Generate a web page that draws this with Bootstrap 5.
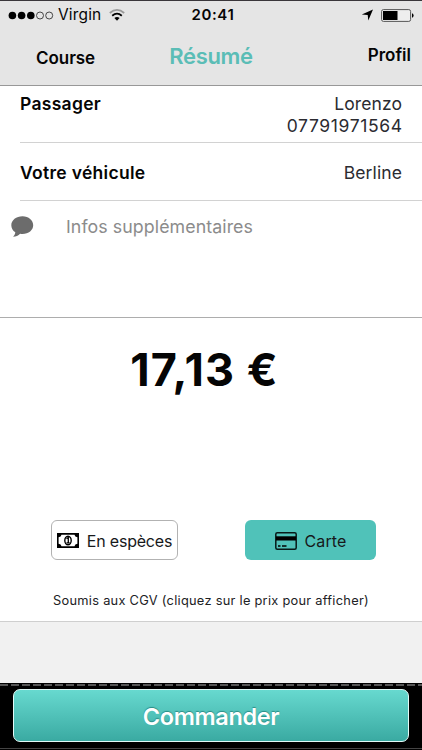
<!DOCTYPE html>
<html lang="fr">
<head>
<meta charset="utf-8">
<meta name="viewport" content="width=device-width, initial-scale=1">
<title>Résumé</title>
<link href="https://cdn.jsdelivr.net/npm/bootstrap@5.3.0/dist/css/bootstrap.min.css" rel="stylesheet">
<style>
body{font-family:Inter,"Liberation Sans",sans-serif;height:750px;overflow:hidden;background:#f1f1f1;color:#050505}
svg{display:block;flex:none}
.app-head{height:86px;background:#e5e5e5;border-top:1px solid #39363a;border-bottom:1px solid #989898}
.status{height:28px;padding:0 8px;font-size:15.5px;line-height:28px}
.side{width:150px}
.carrier{letter-spacing:.15px}
.clock{font-weight:600;font-size:15px;letter-spacing:.6px;padding-left:4px}
.titles{height:56px;line-height:24px;font-weight:600;font-size:17px}
.t-left{width:141px;padding:17px 0 0 36px;letter-spacing:-.05px}
.t-mid{padding-top:15px;font-size:22px;color:#5bbdb6;letter-spacing:-.3px}
.t-right{width:141px;padding:14px 11px 0 0}
.info-row{margin-left:20px;padding-right:20px;border-bottom:1px solid #d2d2d2;font-size:17.5px;line-height:22px;letter-spacing:.1px}
.r1{height:57px;padding-top:7px}
.r2{height:58px;padding-top:19px}
.info-row strong{font-weight:600;letter-spacing:.3px}
.val{color:#2b2b31}
.phone{letter-spacing:.62px;margin-right:-.6px}
.note{height:117px;padding:15px 0 0 11px;border-bottom:1px solid #adadad;font-size:17.8px;line-height:22px;color:#8b8b8b;letter-spacing:.07px}
.note-text{margin-left:32px}
.pay{height:304px;border-bottom:1px solid #cfcfcf}
.price{padding-top:24px;font-size:45px;line-height:56px;font-weight:700;padding-right:13px;letter-spacing:1.1px}
.choices{margin-top:122px;padding-left:51px}
.choice{height:40px;border-radius:6px;font-size:16px;line-height:20px;letter-spacing:.1px;color:#17191b;padding:1px 0 0}
.cash{width:127px;border:1.5px solid #b2b2b2;background:#fff;letter-spacing:-.2px}
.cardpay{width:131px;margin-left:67px;background:#50c2b9;border:0}
.terms{font-size:12.8px;line-height:18px;margin-top:32px;letter-spacing:.28px;color:#202124}
.foot{height:67px;background:#000;margin-top:auto;padding:0 13px 0 13px}
.dashes{height:2px;margin:1px -13px 3px;background:repeating-linear-gradient(90deg,#555 0 8px,#000 8px 11px)}
.order{height:53px;border:1.5px solid #e2faf7;border-radius:7px;background:linear-gradient(#67d9cf,#3aaaa2);color:#fff;font-weight:600;font-size:23.5px;letter-spacing:-.35px;line-height:30px;text-shadow:0 -1px 1px #2b8d86;padding:2px 0 0}
.base-line{height:1px;margin:6px -13px 0;background:#444}
</style>
<script src="https://cdn.jsdelivr.net/npm/bootstrap@5.3.0/dist/js/bootstrap.bundle.min.js"></script>
</head>
<body class="d-flex flex-column">
<header class="app-head">
  <div class="status d-flex align-items-center justify-content-between">
    <div class="side d-flex align-items-center">
      <svg width="46" height="9" viewBox="0 0 46 9"><g fill="#000"><circle cx="4.4" cy="4.5" r="3.8"/><circle cx="13.6" cy="4.5" r="3.8"/><circle cx="22.8" cy="4.5" r="3.8"/></g><g fill="none" stroke="#333" stroke-width=".9"><circle cx="32" cy="4.5" r="3.5"/><circle cx="41.2" cy="4.5" r="3.5"/></g></svg>
      <span class="carrier ms-1">Virgin</span>
      <svg class="ms-2" width="16" height="12" viewBox="0 0 16 12"><path d="M.8 4Q8-2.200 15.200 4" fill="none" stroke="#999" stroke-width="1.7"/><path d="M3.200 6.700Q8 2.500 12.800 6.700" fill="none" stroke="#000" stroke-width="1.8"/><path d="M5.400 9Q8 6.800 10.600 9L8 11.800z"/></svg>
    </div>
    <div class="clock">20:41</div>
    <div class="side d-flex align-items-center justify-content-end">
      <svg width="12" height="12" viewBox="0 0 12 12"><path d="M12 .5 7.300 11.600 6.700 6 .8 5.600z"/></svg>
      <svg class="ms-2" width="33" height="13" viewBox="0 0 33 13"><rect x=".6" y=".6" width="29" height="11.8" rx="1.8" fill="#eee" stroke="#555"/><path d="M2 2h14.500v9H2z"/><path d="M31 4.200q1.600.5 1.600 2.300T31 8.800z"/></svg>
    </div>
  </div>
  <nav class="titles d-flex justify-content-between">
    <div class="t-left">Course</div><div class="t-mid">Résumé</div><div class="t-right text-end">Profil</div>
  </nav>
</header>
<main class="bg-white">
  <div class="info-row r1 d-flex justify-content-between"><strong>Passager</strong><div class="val text-end">Lorenzo<div class="phone">07791971564</div></div></div>
  <div class="info-row r2 d-flex justify-content-between"><strong>Votre véhicule</strong><div class="val">Berline</div></div>
  <div class="note d-flex align-items-start">
    <svg width="23" height="22" viewBox="0 0 23 22"><path d="M11.500 .3C5.200 .3 .3 4.200 .3 9.200c0 2.900 1.500 5.400 4 7-.1 1.800-1 3.300-2.200 4.600 2.700-.2 5.300-1.300 7-3.100.8.100 1.600.2 2.400.2 6.200 0 10.700-3.900 10.700-8.700S17.700.3 11.500.3z" fill="#6c6c6c"/></svg>
    <span class="note-text">Infos supplémentaires</span>
  </div>
  <section class="pay">
    <div class="price text-center">17,13 €</div>
    <div class="choices d-flex">
      <button class="btn choice cash d-flex align-items-center justify-content-center gap-2">
        <svg width="22" height="15" viewBox="0 0 22 15"><path fill="#000" fill-rule="evenodd" d="M0 0h22v15H0zM4.500 1.700Q4.200 4 1.600 4.200v6.600q2.600.2 2.900 2.500h13q.3-2.300 2.900-2.500V4.200q-2.600-.2-2.900-2.500z"/><ellipse cx="11" cy="7.500" rx="3.200" ry="4.200" fill="#fff" stroke="#000" stroke-width="1.400"/><path d="M9.500 5.700 11.300 4.500v5.200M9.500 9.900h3.200" fill="none" stroke="#000" stroke-width="1.300"/></svg>
        <span>En espèces</span>
      </button>
      <button class="btn choice cardpay d-flex align-items-center justify-content-center gap-2">
        <svg width="22" height="18" viewBox="0 0 22 18"><rect x=".8" y=".8" width="20.400" height="16.400" rx="1.500" fill="none" stroke="#081a19" stroke-width="1.500"/><path d="M1 4.300h20v4.200H1z" fill="#000"/><path d="M3 14h2.500M7 14h4.500" stroke="#000" stroke-width="1.500"/></svg>
        <span>Carte</span>
      </button>
    </div>
    <div class="terms text-center">Soumis aux CGV (cliquez sur le prix pour afficher)</div>
  </section>
</main>
<footer class="foot d-flex flex-column">
  <div class="dashes"></div>
  <button class="btn order">Commander</button>
  <div class="base-line"></div>
</footer>
</body>
</html>
